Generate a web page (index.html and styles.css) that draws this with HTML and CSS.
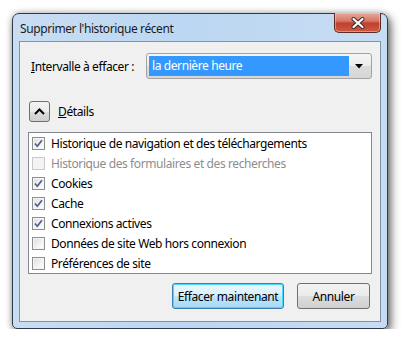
FILE: index.html
```html
<!DOCTYPE html>
<html>
<head>
  <title>Supprimer l'historique récent</title>
  <link rel="stylesheet" href="styles.css">
</head>
<body>
  <div class="window">
    <div class="titlebar">
      <span class="title">Supprimer l'historique récent</span>
      <button class="close-btn">
        <svg width="16" height="12" viewBox="0 0 16 12">
          <path d="M3.5 2 L12.5 10 M12.5 2 L3.5 10" stroke="#3a2a2a" stroke-width="4" stroke-linecap="round"/>
          <path d="M3.5 2 L12.5 10 M12.5 2 L3.5 10" stroke="#fff" stroke-width="2.2" stroke-linecap="round"/>
        </svg>
      </button>
    </div>

    <div class="client">
      <div class="range-row">
        <label class="range-label"><u>I</u>ntervalle à effacer :</label>
        <div class="dropdown">
          <span class="dropdown-value">la dernière heure</span>
          <span class="dropdown-arrow">
            <svg width="8" height="5" viewBox="0 0 8 5"><polygon points="0,0 8,0 4,4.5" fill="#000"/></svg>
          </span>
        </div>
      </div>

      <div class="details-row">
        <button class="details-btn">
          <svg width="11" height="7" viewBox="0 0 11 7"><path d="M1 6 L5.5 1.5 L10 6" fill="none" stroke="#000" stroke-width="2"/></svg>
        </button>
        <span class="details-label"><u>D</u>étails</span>
      </div>

      <div class="item-list">
        <div class="item"><span class="box checked"></span>Historique de navigation et des téléchargements</div>
        <div class="item disabled"><span class="box"></span>Historique des formulaires et des recherches</div>
        <div class="item"><span class="box checked"></span>Cookies</div>
        <div class="item"><span class="box checked"></span>Cache</div>
        <div class="item"><span class="box checked"></span>Connexions actives</div>
        <div class="item"><span class="box"></span>Données de site Web hors connexion</div>
        <div class="item"><span class="box"></span>Préférences de site</div>
      </div>

      <div class="button-row">
        <button class="btn btn-default">Effacer maintenant</button>
        <button class="btn btn-cancel">Annuler</button>
      </div>
    </div>
  </div>
</body>
</html>
```

FILE: styles.css
```css
* {
  box-sizing: border-box;
  margin: 0;
  padding: 0;
}

body {
  font-family: "Noto Sans", "Open Sans", sans-serif;
  font-size: 12px;
  letter-spacing: -0.4px;
  color: #000;
  background-color: #fff;
  padding: 13px 0 0 12px;
}

.window {
  width: 376px;
  height: 316px;
  border: 1px solid #2f3b4a;
  border-radius: 7px 7px 5px 5px;
  padding: 0 6px 5px 6px;
  background: linear-gradient(90deg, #c9ddf2 0%, #bcd7f3 45%, #c6dcf2 100%);
  box-shadow: 3px 4px 10px rgba(0, 0, 0, 0.55), 0 0 6px rgba(0, 0, 0, 0.25);
}

.titlebar {
  height: 27px;
  display: flex;
  align-items: flex-start;
  justify-content: space-between;
  padding-left: 1px;
}

.title {
  margin-top: 6px;
  color: #1b1b1b;
}

.close-btn {
  width: 47px;
  height: 20px;
  margin-top: -1px;
  border: 1px solid #5b2c24;
  border-top: none;
  border-radius: 0 0 5px 5px;
  background: linear-gradient(#e7a89b 0%, #d9796a 40%, #c2412b 55%, #cd5a44 100%);
  box-shadow: inset 0 0 0 1px rgba(255, 210, 200, 0.45);
  display: flex;
  align-items: center;
  justify-content: center;
}

.client {
  height: 281px;
  border: 1px solid #8293a7;
  background-color: #f0f0f0;
  padding: 11px 8px 0 8px;
}

.range-row {
  display: flex;
  align-items: center;
  height: 26px;
}

.range-label {
  padding-left: 3px;
}

.dropdown {
  margin-left: auto;
  width: 226px;
  height: 26px;
  border: 1px solid #a3a3a3;
  border-radius: 3px;
  background: linear-gradient(#f6f6f6 0%, #ececec 50%, #dcdcdc 51%, #d7d7d7 100%);
  display: flex;
  align-items: center;
  padding: 2px;
}

.dropdown-value {
  flex: 1;
  height: 20px;
  line-height: 20px;
  background-color: #3399ff;
  color: #fff;
  padding-left: 3px;
}

.dropdown-arrow {
  width: 20px;
  display: flex;
  justify-content: center;
  padding-top: 1px;
}

.details-row {
  display: flex;
  align-items: center;
  margin-top: 22px;
  height: 21px;
}

.details-btn {
  width: 21px;
  height: 21px;
  margin-left: 1px;
  border: 1px solid #707070;
  border-radius: 3px;
  background: linear-gradient(#f2f2f2 0%, #ebebeb 50%, #dddddd 51%, #cfcfcf 100%);
  display: flex;
  align-items: center;
  justify-content: center;
}

.details-label {
  margin-left: 8px;
}

.item-list {
  margin-top: 10px;
  height: 142px;
  border: 1px solid #828790;
  background-color: #fff;
}

.item {
  height: 20px;
  display: flex;
  align-items: center;
  padding-left: 3px;
}

.item.disabled {
  color: #8d8d8d;
}

.box {
  width: 13px;
  height: 13px;
  margin-right: 6px;
  border: 1px solid #8e8f8f;
  background: linear-gradient(135deg, #dcdcdc 0%, #f4f4f4 60%, #ffffff 100%);
  box-shadow: inset 0 0 0 1px #f4f4f4;
}

.item.disabled .box {
  border-color: #c9c9c9;
  background: #f4f4f4;
}

.box.checked {
  background:
    url("data:image/svg+xml;utf8,<svg xmlns='http://www.w3.org/2000/svg' width='11' height='11' viewBox='0 0 11 11'><path d='M2 5.5 L4.3 8.2 L9 2.2' fill='none' stroke='%234a5f95' stroke-width='1.7'/></svg>") center / 11px 11px no-repeat,
    linear-gradient(135deg, #dcdcdc 0%, #f4f4f4 60%, #ffffff 100%);
}

.button-row {
  display: flex;
  justify-content: flex-end;
  margin-top: 9px;
  padding-right: 2px;
}

.btn {
  height: 26px;
  font-family: inherit;
  font-size: 12px;
  letter-spacing: inherit;
  color: #000;
  border: 1px solid #707070;
  border-radius: 3px;
  background: linear-gradient(#f2f2f2 0%, #ebebeb 50%, #dddddd 51%, #cfcfcf 100%);
}

.btn-default {
  width: 112px;
  border-color: #3c7fb1;
  background: linear-gradient(#eaf6fd 0%, #d9f0fc 50%, #bee6fd 51%, #a7d9f5 100%);
  box-shadow: inset 0 0 0 1px #48d8fb;
}

.btn-cancel {
  width: 73px;
  margin-left: 13px;
}
```
